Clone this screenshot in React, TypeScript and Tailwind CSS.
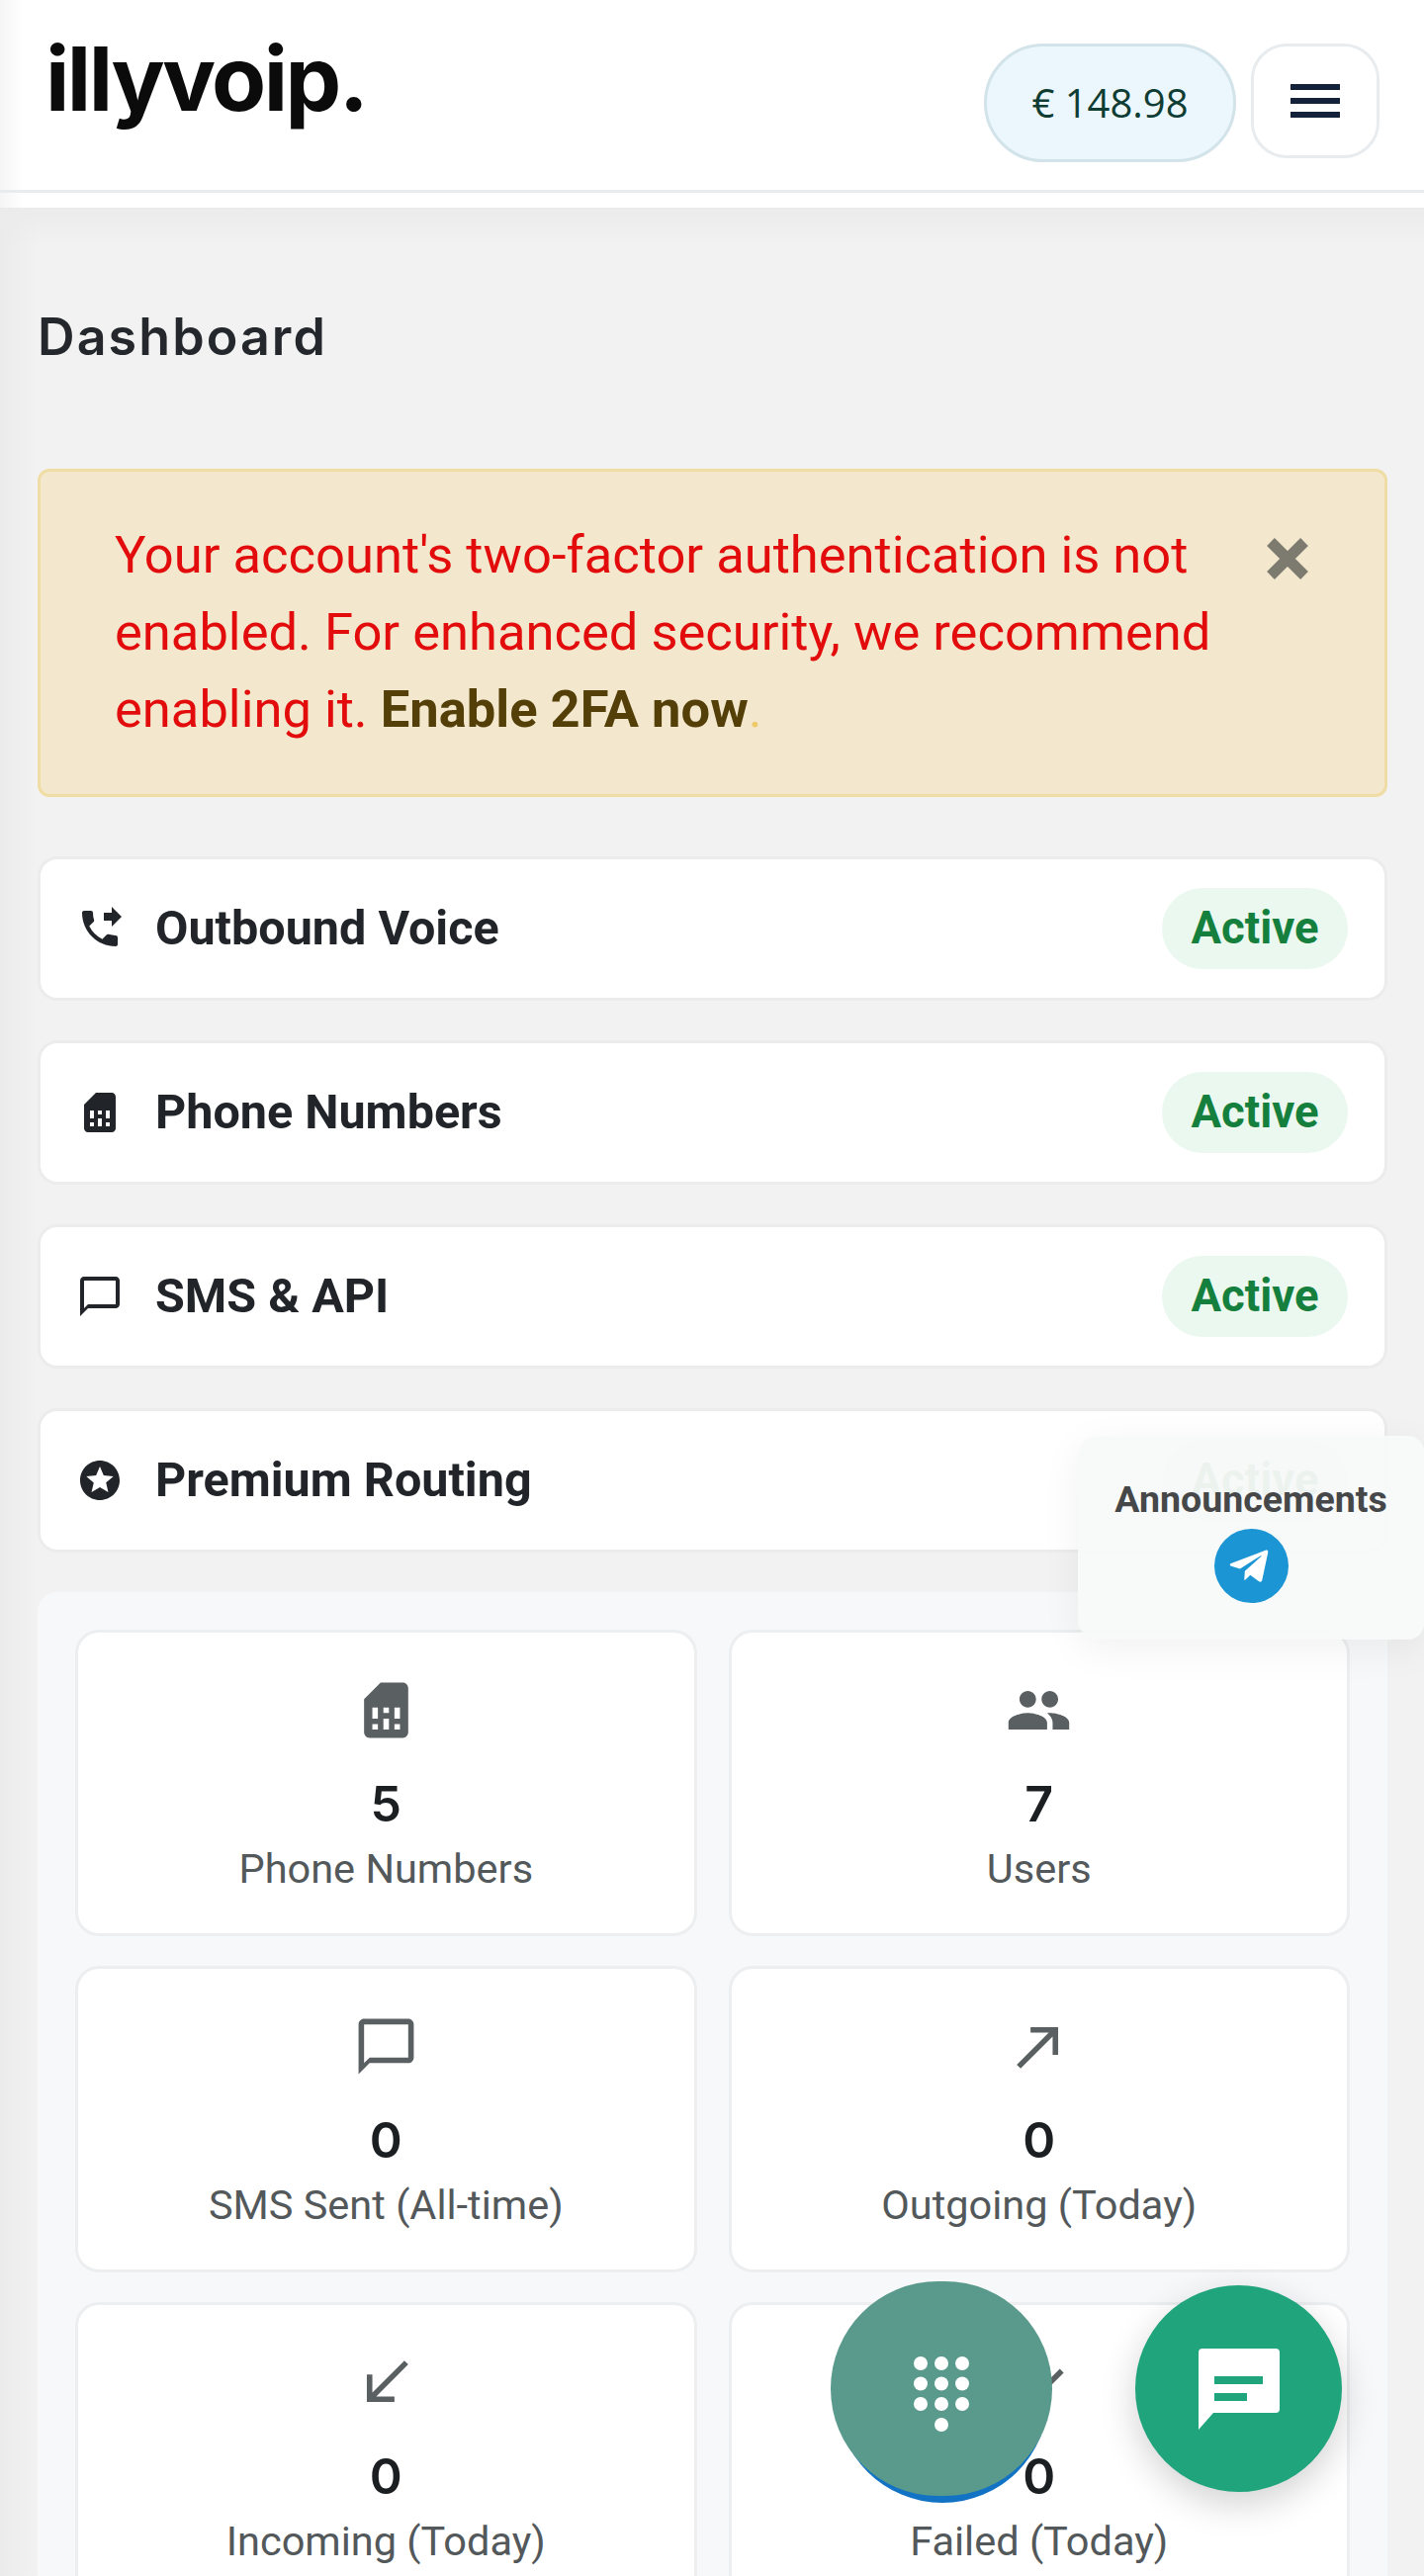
import { MdCallMade, MdCallMissed, MdCallReceived, MdChatBubbleOutline, MdPeople, MdPhoneForwarded, MdSimCard, MdStars } from 'react-icons/md';
import { FaTelegramPlane } from 'react-icons/fa';
import type { IconType } from 'react-icons';

const services: { label: string; icon: IconType }[] = [
  { label: 'Outbound Voice', icon: MdPhoneForwarded },
  { label: 'Phone Numbers', icon: MdSimCard },
  { label: 'SMS & API', icon: MdChatBubbleOutline },
  { label: 'Premium Routing', icon: MdStars },
];

const stats: { value: number; label: string; icon: IconType }[] = [
  { value: 5, label: 'Phone Numbers', icon: MdSimCard },
  { value: 7, label: 'Users', icon: MdPeople },
  { value: 0, label: 'SMS Sent (All-time)', icon: MdChatBubbleOutline },
  { value: 0, label: 'Outgoing (Today)', icon: MdCallMade },
  { value: 0, label: 'Incoming (Today)', icon: MdCallReceived },
  { value: 0, label: 'Failed (Today)', icon: MdCallMissed },
];

export default function App() {
  return (
    <div className="relative h-[2605px] w-[1440px] overflow-hidden bg-[#f2f2f2] font-['Roboto',sans-serif] text-[#212529]">
      {/* Header */}
      <header className="h-[210px] bg-[linear-gradient(to_right,#f5f5f5,#ffffff_24px)]">
        <div className="flex h-[195px] items-start justify-between border-b-[3px] border-[#e9ecef] pr-[45px] pl-[46px]">
          <span className="mt-[34px] font-['Inter',sans-serif] text-[90px] leading-[92px] font-bold tracking-[-0.028em] text-[#0b0b0b]">illyvoip.</span>
          <div className="mt-[44px] flex items-start gap-[15px]">
            <div className="flex h-[120px] w-[255px] items-center justify-center rounded-[60px] border-[3px] border-[#d3e3ea] bg-[#ecf7fd] font-['Open_Sans',sans-serif] text-[40px] text-[#0f3d33]">€ 148.98</div>
            <button className="flex h-[116px] w-[130px] flex-col items-center justify-center gap-[8px] rounded-[36px] border-[3px] border-[#e9ecef] bg-white">
              <span className="h-[6px] w-[50px] bg-[#14213a]" />
              <span className="h-[6px] w-[50px] bg-[#14213a]" />
              <span className="h-[6px] w-[50px] bg-[#14213a]" />
            </button>
          </div>
        </div>
      </header>

      {/* Page body */}
      <main className="bg-[linear-gradient(to_bottom,#ebebeb,transparent_40px),linear-gradient(to_right,#ebebeb,#f2f2f2_38px)] pt-[100px] pr-[37px] pl-[38px]">
        <h1 className="font-['Inter',sans-serif] text-[52px] leading-[62px] font-semibold tracking-[0.04em] text-[#24282c]">Dashboard</h1>

        <div className="mt-[102px] flex h-[332px] items-start justify-between rounded-[12px] border-[3px] border-[#f0dda6] bg-[#f3e8cd] pt-[45px] pr-[76px] pl-[75px]">
          <p className="w-[1130px] text-[52.5px] leading-[78px] text-[#e20c0c]">
            Your account's two-factor authentication is not enabled. For enhanced security, we recommend enabling it.{' '}
            <span className="font-bold text-[#533f07]">Enable 2FA now</span>
            <span className="text-[#eec968]">.</span>
          </p>
          <svg width="44" height="44" viewBox="0 0 44 44" className="mt-[21px] shrink-0">
            <path d="M5 5 39 39M39 5 5 39" stroke="#7d7b6f" strokeWidth="11" />
          </svg>
        </div>

        <div className="mt-[60px] flex flex-col gap-[40px]">
          {services.map(({ label, icon: Icon }) => (
            <div key={label} className="flex h-[146px] items-center justify-between rounded-[20px] border-[3px] border-[#ececec] bg-white pr-[37px] pl-[36px]">
              <div className="flex items-center gap-[32px]">
                <Icon size={48} className="text-[#212529]" />
                <span className="text-[48.5px] font-bold">{label}</span>
              </div>
              <span className="flex h-[82px] w-[188px] items-center justify-center rounded-[41px] bg-[#eaf8ef] text-[45.5px] font-bold text-[#15803d]">Active</span>
            </div>
          ))}
        </div>

        <section className="mt-[40px] rounded-t-[20px] bg-[#f7f8f9] px-[38px] pt-[38px]">
          <div className="grid grid-cols-2 gap-x-[32px] gap-y-[30px]">
            {stats.map(({ value, label, icon: Icon }) => (
              <div key={label} className="flex h-[310px] flex-col items-center rounded-[24px] border-[3px] border-[#eceeef] bg-white pt-[45px]">
                <Icon size={67} className="shrink-0 text-[#5a5f62]" />
                <span className="mt-[32px] font-['Inter',sans-serif] text-[50px] leading-[58px] font-semibold text-[#1c1f22]">{value}</span>
                <span className="mt-[9px] text-[41.5px] leading-[56px] text-[#53585b]">{label}</span>
              </div>
            ))}
          </div>
        </section>
      </main>

      {/* Floating announcements card */}
      <aside className="absolute top-[1452px] right-0 flex h-[206px] w-[350px] flex-col items-center rounded-l-[20px] rounded-r-[16px] bg-[#f8f9f9]/95 pt-[40px] shadow-[0_10px_40px_rgba(0,0,0,0.06)]">
        <span className="text-[37.5px] leading-[48px] font-bold text-[#454749]">Announcements</span>
        <span className="mt-[6px] flex h-[75px] w-[75px] items-center justify-center rounded-full bg-[#1b95d4]">
          <FaTelegramPlane size={44} className="-ml-[4px] text-white" />
        </span>
      </aside>

      {/* Dialpad button */}
      <span className="absolute top-[2317px] left-[846px] h-[214px] w-[214px] rounded-full bg-[#1273c4]" />
      <button className="absolute top-[2307px] left-[840px] flex h-[217px] w-[224px] items-center justify-center rounded-full bg-[#5a9a8c]">
        <svg width="60" height="80" viewBox="0 0 60 80" fill="#fff" className="mt-[12px]">
          {[0, 1, 2].flatMap(r => [0, 1, 2].map(c => <circle key={`${r}-${c}`} cx={9 + c * 21} cy={8 + r * 20.5} r="7" />))}
          <circle cx="30" cy="70" r="7" />
        </svg>
      </button>

      {/* Chat button */}
      <button className="absolute top-[2311px] left-[1148px] flex h-[209px] w-[209px] items-center justify-center rounded-full bg-[#1fa47b] shadow-[0_12px_36px_rgba(0,0,0,0.18)]">
        <svg width="82" height="82" viewBox="0 0 82 82">
          <path d="M4 0h74a4 4 0 0 1 4 4v57a4 4 0 0 1-4 4H15L0 82V4a4 4 0 0 1 4-4z" fill="#fff" />
          <rect x="16" y="28" width="49" height="8" fill="#1fa47b" />
          <rect x="16" y="45" width="33" height="8" fill="#1fa47b" />
        </svg>
      </button>
    </div>
  );
}
